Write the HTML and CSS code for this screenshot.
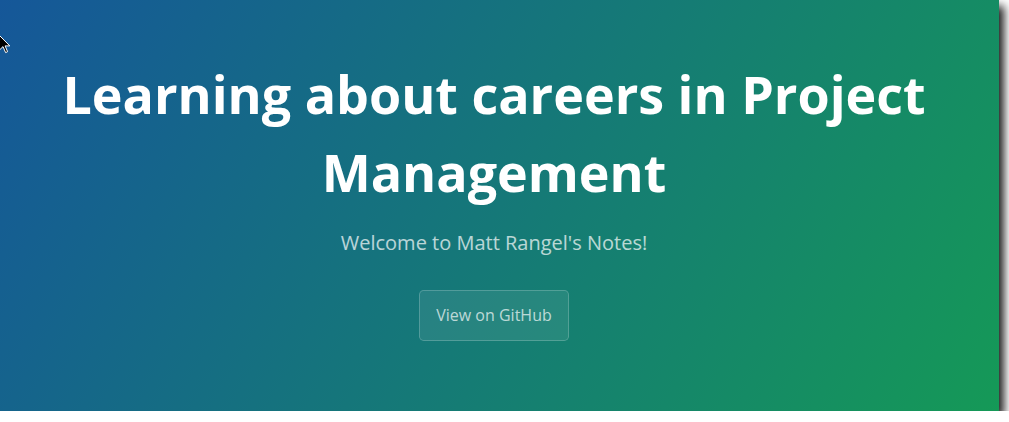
FILE: index.html
```html
<!DOCTYPE html>
<html lang="en">
<head>
<meta charset="utf-8">
<title>Learning about careers in Project Management</title>
<link rel="stylesheet" href="styles.css">
</head>
<body>
<div class="window">
  <section class="page-header">
    <h1 class="project-name">Learning about careers in Project Management</h1>
    <h2 class="project-tagline">Welcome to Matt Rangel's Notes!</h2>
    <a class="btn" href="#">View on GitHub</a>
  </section>
  <svg class="cursor" width="12" height="19" viewBox="0 0 12 19" aria-hidden="true">
    <path d="M0.5 0.5 L0.5 15 L4 11.6 L6.6 17.6 L8.6 16.7 L6.1 10.9 L10.8 10.9 Z" fill="#000" stroke="#fff" stroke-width="1"/>
  </svg>
</div>
</body>
</html>
```
FILE: styles.css
```css
html, body {
  margin: 0;
  padding: 0;
  background: #fff;
}

body {
  font-family: "Open Sans", "Helvetica Neue", Helvetica, Arial, sans-serif;
  line-height: 1.5;
  color: #606c71;
}

.window {
  position: relative;
  width: 999px;
  height: 411px;
  box-shadow: 5px 6px 9px rgba(0, 0, 0, 0.9);
}

.page-header {
  box-sizing: border-box;
  height: 411px;
  padding: 55px 61px 55px 50px;
  color: #fff;
  text-align: center;
  background-color: #159957;
  background-image: linear-gradient(120deg, #155799, #159957);
}

.project-name {
  margin: 0 0 2px;
  font-size: 52px;
  font-weight: 700;
  line-height: 1.5;
}

.project-tagline {
  margin: 17px 0 32px;
  font-size: 20px;
  font-weight: 400;
  line-height: 1.5;
  opacity: 0.7;
}

.btn {
  display: inline-block;
  padding: 12px 16px;
  font-size: 16px;
  line-height: 25px;
  color: rgba(255, 255, 255, 0.7);
  text-decoration: none;
  background-color: rgba(255, 255, 255, 0.08);
  border: 1px solid rgba(255, 255, 255, 0.2);
  border-radius: 4.8px;
}

.cursor {
  position: absolute;
  left: -1px;
  top: 35px;
}
```
